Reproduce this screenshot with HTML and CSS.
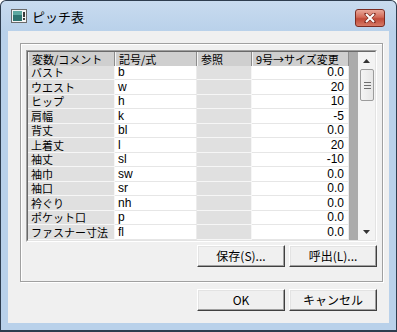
FILE: index.html
```html
<!DOCTYPE html>
<html lang="ja">
<head>
    <meta charset="UTF-8">
    <title>ピッチ表</title>
    <link rel="stylesheet" href="styles.css">
</head>
<body>
    <div class="window">
        <div class="titlebar">
            <svg class="app-icon" width="16" height="14" viewBox="0 0 16 14">
                <rect x="0.5" y="0.5" width="15" height="13" fill="#f4f4f4" stroke="#6a6a6a"/>
                <rect x="2" y="2" width="9" height="10" fill="#2f7470"/>
                <rect x="2" y="2" width="9" height="4" fill="#5ea8a0"/>
                <rect x="12" y="3" width="2" height="5" fill="#3a3a3a"/>
                <rect x="12" y="9" width="2" height="2" fill="#3a3a3a"/>
            </svg>
            <span class="title">ピッチ表</span>
            <div class="close-btn">
                <svg width="12" height="10" viewBox="0 0 12 10">
                    <path d="M2 1 L10 9 M10 1 L2 9" stroke="#7a2a20" stroke-width="3.2" stroke-linecap="round"/>
                    <path d="M2 1 L10 9 M10 1 L2 9" stroke="#fff" stroke-width="2"/>
                </svg>
            </div>
        </div>
        <div class="client">
            <div class="groupbox">
                <div class="grid">
                    <div class="grid-inner">
                        <table class="pitch-table">
                            <colgroup>
                                <col class="c-label"><col class="c-code"><col class="c-ref"><col class="c-value">
                            </colgroup>
                            <thead>
                                <tr><th>変数/コメント</th><th>記号/式</th><th>参照</th><th>9号→サイズ変更</th></tr>
                            </thead>
                            <tbody>
                                <tr><td class="label">バスト</td><td class="code">b</td><td class="ref"></td><td class="num">0.0</td></tr>
                                <tr><td class="label">ウエスト</td><td class="code">w</td><td class="ref"></td><td class="num">20</td></tr>
                                <tr><td class="label">ヒップ</td><td class="code">h</td><td class="ref"></td><td class="num">10</td></tr>
                                <tr><td class="label">肩幅</td><td class="code">k</td><td class="ref"></td><td class="num">-5</td></tr>
                                <tr><td class="label">背丈</td><td class="code">bl</td><td class="ref"></td><td class="num">0.0</td></tr>
                                <tr><td class="label">上着丈</td><td class="code">l</td><td class="ref"></td><td class="num">20</td></tr>
                                <tr><td class="label">袖丈</td><td class="code">sl</td><td class="ref"></td><td class="num">-10</td></tr>
                                <tr><td class="label">袖巾</td><td class="code">sw</td><td class="ref"></td><td class="num">0.0</td></tr>
                                <tr><td class="label">袖口</td><td class="code">sr</td><td class="ref"></td><td class="num">0.0</td></tr>
                                <tr><td class="label">衿ぐり</td><td class="code">nh</td><td class="ref"></td><td class="num">0.0</td></tr>
                                <tr><td class="label">ポケット口</td><td class="code">p</td><td class="ref"></td><td class="num">0.0</td></tr>
                                <tr><td class="label">ファスナー寸法</td><td class="code">fl</td><td class="ref"></td><td class="num">0.0</td></tr>
                            </tbody>
                        </table>
                        <div class="grid-empty"></div>
                        <div class="vscroll">
                            <div class="arrow">
                                <svg width="7" height="4" viewBox="0 0 7 4"><path d="M3.5 0 L7 4 L0 4 Z" fill="#333"/></svg>
                            </div>
                            <div class="thumb"><span></span><span></span><span></span></div>
                            <div class="track"></div>
                            <div class="arrow">
                                <svg width="7" height="4" viewBox="0 0 7 4"><path d="M0 0 L7 0 L3.5 4 Z" fill="#333"/></svg>
                            </div>
                        </div>
                    </div>
                </div>
                <div class="button-row">
                    <button class="btn">保存(S)...</button>
                    <button class="btn">呼出(L)...</button>
                </div>
            </div>
            <div class="button-row dialog-buttons">
                <button class="btn btn-default">OK</button>
                <button class="btn">キャンセル</button>
            </div>
        </div>
    </div>
</body>
</html>
```

FILE: styles.css
```css
body {
    margin: 0;
    width: 397px;
    height: 332px;
    overflow: hidden;
    font-family: "Noto Sans CJK JP", sans-serif;
    font-size: 12px;
    color: #000;
    background: #fff;
}
.window {
    box-sizing: border-box;
    width: 397px;
    height: 332px;
    display: flex;
    flex-direction: column;
    padding: 0 7px 7px;
    border: 1px solid #2e3d4f;
    border-bottom-width: 2px;
    border-radius: 6px 6px 0 0;
    background: linear-gradient(#c8dbef, #b9d1ea 30px);
}
.titlebar {
    height: 30px;
    display: flex;
    align-items: center;
}
.app-icon {
    margin-left: 3px;
}
.title {
    margin-left: 5px;
    font-size: 13px;
    line-height: 15px;
}
.close-btn {
    box-sizing: border-box;
    width: 30px;
    height: 18px;
    margin-left: auto;
    margin-right: 4px;
    align-self: flex-start;
    margin-top: 8px;
    display: flex;
    align-items: center;
    justify-content: center;
    border: 1px solid #7b2c22;
    border-radius: 3px;
    background: linear-gradient(#e9a89a, #d26a58 45%, #c04a38 55%, #d77a66);
}
.client {
    flex: 1;
    display: flex;
    flex-direction: column;
    padding: 12px 6px 12px 12px;
    background: #f0f0f0;
}
.groupbox {
    box-sizing: border-box;
    height: 239px;
    padding: 6px 5px 14px 5px;
    border: 1px solid #a0a0a0;
    box-shadow: inset 1px 1px 0 #fff, 1px 1px 0 #fff;
}
.grid {
    border: 1px solid;
    border-color: #a0a0a0 #fff #fff #a0a0a0;
}
.grid-inner {
    display: flex;
    height: 188px;
    border: 1px solid;
    border-color: #696969 #e3e3e3 #e3e3e3 #696969;
    background: #ababab;
}
.pitch-table {
    border-collapse: separate;
    border-spacing: 0;
    table-layout: fixed;
    width: 321px;
    align-self: flex-start;
    font-size: 11px;
}
.c-label { width: 87px; }
.c-code { width: 82px; }
.c-ref { width: 55px; }
.c-value { width: 97px; }
.pitch-table th {
    height: 14px;
    padding: 0 0 0 3px;
    font-weight: normal;
    text-align: left;
    line-height: 13px;
    background: #cfcfcf;
    border-right: 1px solid #8c8c8c;
    border-left: 1px solid #f4f4f4;
    white-space: nowrap;
}
.pitch-table tbody tr {
    height: 14px;
}
.pitch-table tbody tr:nth-child(even) {
    height: 15px;
}
.pitch-table td {
    padding: 0 3px;
    line-height: 13px;
    background: #fff;
    border-bottom: 1px solid #e6e6e6;
    border-right: 1px solid #ececec;
    white-space: nowrap;
}
.pitch-table td.label,
.pitch-table td.ref {
    background: #e0e0e0;
    border-bottom-color: #f6f6f6;
    border-right-color: #f6f6f6;
}
.pitch-table td.code {
    font-family: "Liberation Sans", sans-serif;
    font-size: 12px;
}
.pitch-table td.num {
    text-align: right;
    padding-right: 4px;
    font-family: "Liberation Sans", sans-serif;
    font-size: 12px;
}
.grid-empty {
    flex: 1;
}
.vscroll {
    width: 17px;
    display: flex;
    flex-direction: column;
    background: #f3f3f3;
}
.arrow {
    height: 17px;
    display: flex;
    align-items: center;
    justify-content: center;
}
.thumb {
    box-sizing: border-box;
    height: 32px;
    margin: 0 1px 0 2px;
    display: flex;
    flex-direction: column;
    align-items: center;
    justify-content: center;
    gap: 2px;
    border: 1px solid #9c9c9c;
    border-radius: 2px;
    background: linear-gradient(90deg, #f4f4f4, #e6e6e6);
}
.thumb span {
    width: 7px;
    height: 1px;
    background: #6f6f6f;
}
.track {
    flex: 1;
}
.button-row {
    display: flex;
    justify-content: flex-end;
    gap: 4px;
    margin-top: 3px;
}
.dialog-buttons {
    margin-top: 7px;
    margin-right: 6px;
}
.btn {
    box-sizing: border-box;
    width: 88px;
    height: 22px;
    padding: 0;
    font-family: "Noto Sans CJK JP", sans-serif;
    font-size: 12px;
    line-height: 14px;
    color: #000;
    background: #f0f0f0;
    border: 1px solid;
    border-color: #fff #404040 #404040 #fff;
    box-shadow: inset -1px -1px 0 #a0a0a0, inset 1px 1px 0 #e3e3e3;
}
```
